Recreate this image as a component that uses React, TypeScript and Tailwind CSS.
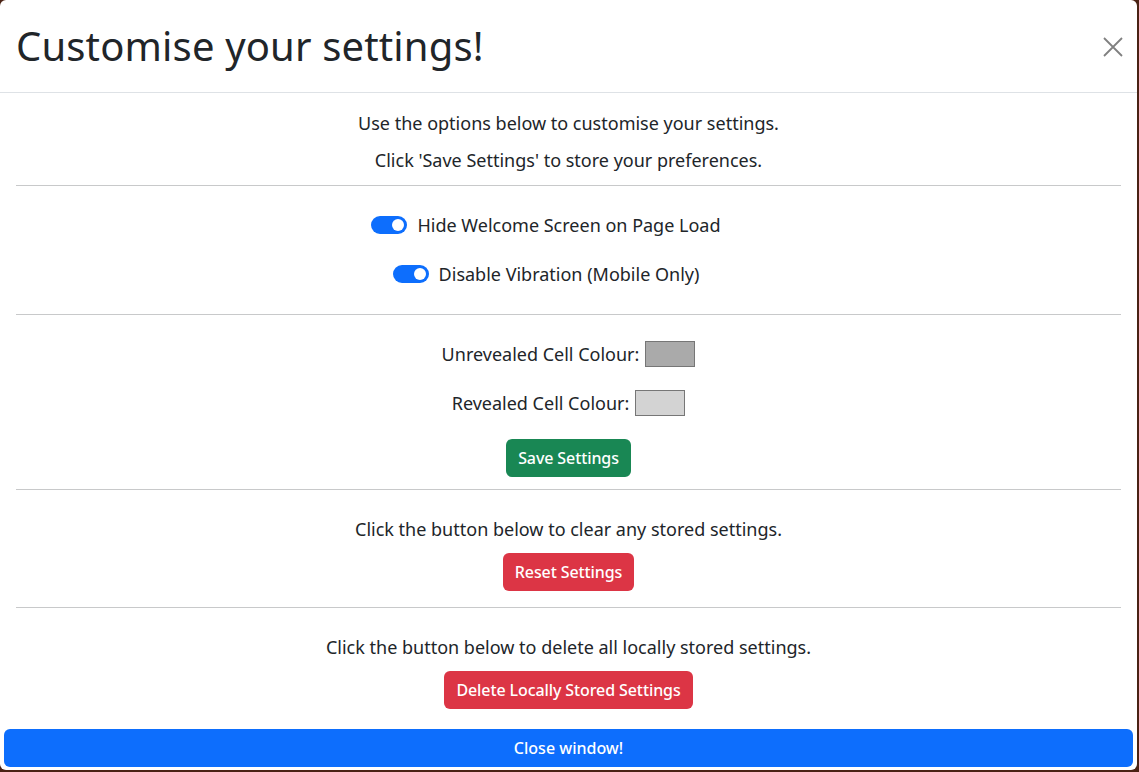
import { useState } from "react";

const font = { fontFamily: '"Noto Sans", "Open Sans", sans-serif' };

const Toggle = ({ on, onClick }: { on: boolean; onClick: () => void }) => (
  <button
    type="button"
    onClick={onClick}
    className={`flex h-[18px] w-[36px] shrink-0 items-center rounded-full px-[3px] ${
      on ? "justify-end bg-[#0d6efd]" : "justify-start border border-[#bfbfbf] bg-white"
    }`}
  >
    <span className={`h-[12px] w-[12px] rounded-full ${on ? "bg-white" : "bg-[#bfbfbf]"}`} />
  </button>
);

const Rule = ({ className }: { className: string }) => (
  <div className={`h-px w-full bg-[#c8c9ca] ${className}`} />
);

export default function App() {
  const [hideWelcome, setHideWelcome] = useState(true);
  const [noVibrate, setNoVibrate] = useState(true);

  return (
    <div className="h-[772px] w-[1139px] overflow-hidden bg-[#4a2214]" style={font}>
      <div className="flex h-[770px] w-[1137px] flex-col rounded-md bg-white text-[18px] text-[#212529]">
        {/* header */}
        <div className="flex h-[93px] shrink-0 items-center justify-between border-b border-[#dee2e6] pl-[17px] pr-[10px]">
          <h1 className="mt-[-1px] ml-[-1px] text-[40px] leading-[48px] font-normal tracking-[0.15px]">
            Customise your settings!
          </h1>
          <button type="button" className="mt-[1px] p-1 text-[#808080]">
            <svg width="20" height="20" viewBox="0 0 20 20" fill="none" stroke="currentColor" strokeWidth="1.8">
              <path d="M1 1 L19 19 M19 1 L1 19" />
            </svg>
          </button>
        </div>

        {/* body */}
        <div className="flex flex-col items-center px-[16px]">
          <p className="mt-[18px] leading-[24px]">Use the options below to customise your settings.</p>
          <p className="mt-[13px] leading-[24px]">Click 'Save Settings' to store your preferences.</p>
          <Rule className="mt-[13px]" />

          <label className="mt-[27px] flex h-[24px] items-center gap-[10px] pr-[45px]">
            <Toggle on={hideWelcome} onClick={() => setHideWelcome(!hideWelcome)} />
            <span>Hide Welcome Screen on Page Load</span>
          </label>
          <label className="mt-[25px] flex h-[24px] items-center gap-[10px] pr-[45px]">
            <Toggle on={noVibrate} onClick={() => setNoVibrate(!noVibrate)} />
            <span>Disable Vibration (Mobile Only)</span>
          </label>
          <Rule className="mt-[28px]" />

          <div className="mt-[26px] flex h-[26px] items-center gap-[6px]">
            <span>Unrevealed Cell Colour:</span>
            <span className="h-[26px] w-[50px] border border-[#767676] bg-[#aaaaaa]" />
          </div>
          <div className="mt-[23px] flex h-[26px] items-center gap-[6px]">
            <span>Revealed Cell Colour:</span>
            <span className="h-[26px] w-[50px] border border-[#767676] bg-[#d3d3d3]" />
          </div>
          <button
            type="button"
            className="mt-[23px] h-[38px] rounded-md bg-[#198754] px-[12px] text-[16px] font-medium tracking-[-0.1px] text-white"
          >
            Save Settings
          </button>
          <Rule className="mt-[12px]" />

          <p className="mt-[27px] leading-[24px]">Click the button below to clear any stored settings.</p>
          <button
            type="button"
            className="mt-[12px] h-[38px] rounded-md bg-[#dc3545] px-[12px] text-[16px] font-medium tracking-[-0.1px] text-white"
          >
            Reset Settings
          </button>
          <Rule className="mt-[16px]" />

          <p className="mt-[27px] leading-[24px]">Click the button below to delete all locally stored settings.</p>
          <button
            type="button"
            className="mt-[12px] h-[38px] rounded-md bg-[#dc3545] px-[12px] text-[16px] font-medium tracking-[-0.1px] text-white"
          >
            Delete Locally Stored Settings
          </button>
        </div>

        <div className="mt-[20px] px-[4px]">
          <button
            type="button"
            className="h-[38px] w-full rounded-md bg-[#0d6efd] text-[16px] font-medium text-white"
          >
            Close window!
          </button>
        </div>
      </div>
    </div>
  );
}
